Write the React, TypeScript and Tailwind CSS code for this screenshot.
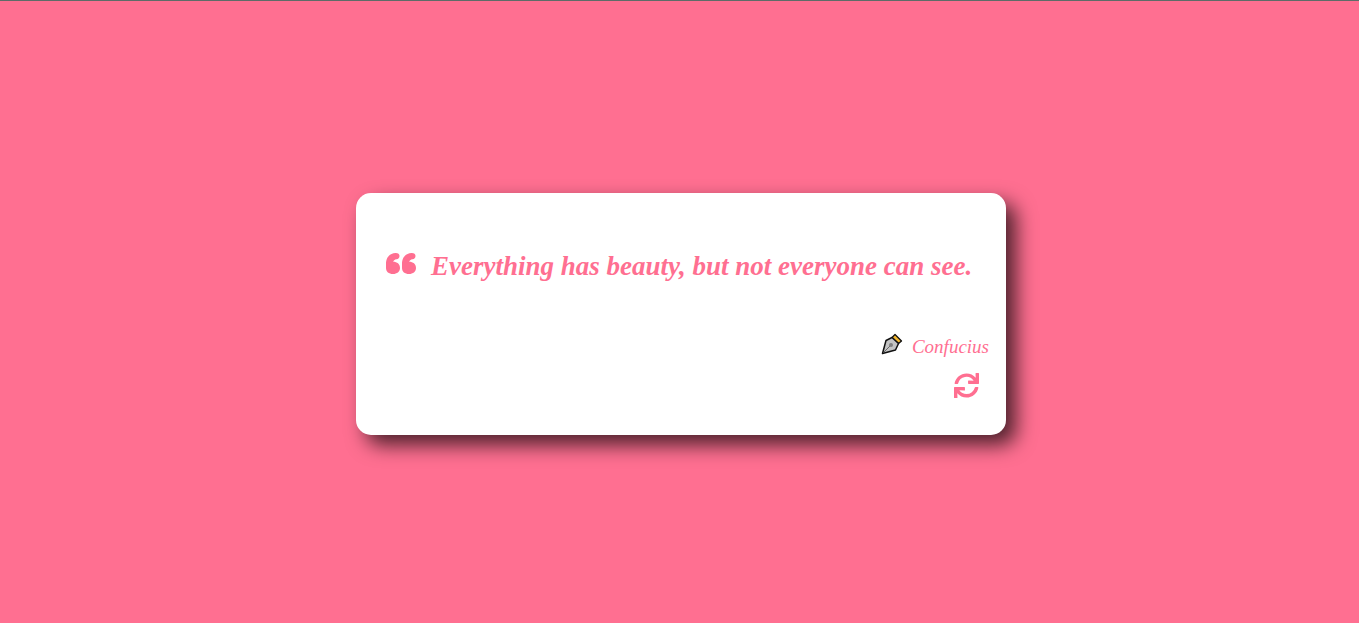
import { FaSync } from "react-icons/fa";

function QuoteMark() {
  const blob = "M0 15V11C0 5 3 .6 9.5 .1C12 0 13.5 1 13.5 3C13.5 5 12.3 6 10.5 6.2C8.6 6.5 7.4 7.5 7.2 8.8C11 8.8 14 11 14 15C14 18.8 11 21 7 21C2.8 21 0 18.8 0 15Z";
  return (
    <svg viewBox="0 0 30 21" className="w-[30px] h-[21px] shrink-0 mb-[5px]" fill="currentColor" aria-hidden="true">
      <path d={blob} />
      <path d={blob} transform="translate(16 0)" />
    </svg>
  );
}

function PenNib() {
  return (
    <svg viewBox="0 0 22 22" className="w-[22px] h-[22px] shrink-0 mb-[4px]" aria-hidden="true">
      <path d="M14 1.5 L20.5 8 L17.5 10.5 L11 4.5 Z" fill="#f5b82e" stroke="#111" strokeWidth="1.3" strokeLinejoin="round" />
      <path d="M11 4.5 L17.5 10.5 L14.5 17 L1.5 20.5 L5 7.5 Z" fill="#c4c4c4" stroke="#111" strokeWidth="1.5" strokeLinejoin="round" />
      <path d="M2.5 19.5 L9 13" stroke="#666" strokeWidth="1" />
      <circle cx="10" cy="12" r="2" fill="#808080" />
    </svg>
  );
}

export default function App() {
  return (
    <div className="flex justify-center items-start h-[623px] overflow-hidden bg-[#ff6f91] border-t border-[#5f6b68] pt-[192px] pl-[3px]">
      <div className="flex flex-col w-[650px] h-[242px] bg-white rounded-[15px] shadow-[10px_10px_20px_rgba(0,0,0,0.7)] pl-[30px] pr-[17px] pt-[54px]">
        <div className="flex items-center gap-[15px] text-[#ff6f91]">
          <QuoteMark />
          <p className="font-['Liberation_Serif',cursive] italic font-bold text-[27px] leading-[38px] whitespace-nowrap">
            Everything has beauty, but not everyone can see.
          </p>
        </div>
        <div className="flex justify-end items-center gap-[9px] mt-[46px] text-[#ff6f91]">
          <PenNib />
          <span className="font-['Liberation_Serif',cursive] italic text-[19px] leading-[28px] mt-[2px]">Confucius</span>
        </div>
        <div className="flex justify-end mt-[12px] pr-[10px]">
          <button className="text-[#ff6f91] cursor-pointer">
            <FaSync className="w-[25px] h-[25px]" />
          </button>
        </div>
      </div>
    </div>
  );
}
